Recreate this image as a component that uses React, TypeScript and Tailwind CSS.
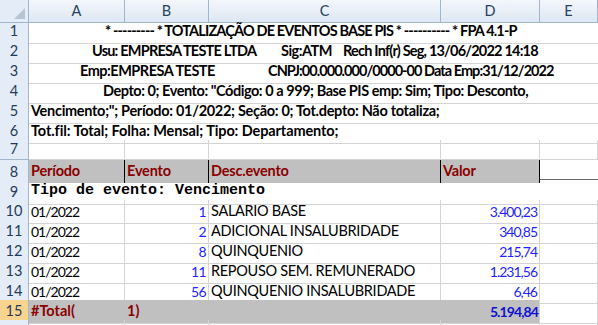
const COLS = ['A', 'B', 'C', 'D', 'E']
const GRID = 'grid grid-cols-[29px_96px_84px_232px_99px_58px] h-[20px]'
const FONT = "font-['Lato','Liberation_Sans',sans-serif]"

const DATA = [
  { n: 10, per: '01/2022', ev: '1', desc: 'SALARIO BASE', val: '3.400,23' },
  { n: 11, per: '01/2022', ev: '2', desc: 'ADICIONAL INSALUBRIDADE', val: '340,85' },
  { n: 12, per: '01/2022', ev: '8', desc: 'QUINQUENIO', val: '215,74' },
  { n: 13, per: '01/2022', ev: '11', desc: 'REPOUSO SEM. REMUNERADO', val: '1.231,56' },
  { n: 14, per: '01/2022', ev: '56', desc: 'QUINQUENIO INSALUBRIDADE', val: '6,46' },
]

function RowHead({ n, active }: { n?: number; active?: boolean }) {
  return (
    <div
      className={`flex items-center justify-center border-r border-b border-[#9eb6ce] text-[14.5px] leading-none text-[#1f3b5c] ${
        active ? 'bg-[#f8d48f]' : 'bg-[#e4ecf7]'
      }`}
    >
      {n}
    </div>
  )
}

// merged-looking rows: text overflows across A..E, no vertical gridlines
function Band({ n, className = '', children }: { n: number; className?: string; children: React.ReactNode }) {
  return (
    <div className={GRID}>
      <RowHead n={n} />
      <div className={`col-span-5 flex items-end pb-[1px] border-b border-[#d4d4d4] text-[14.5px] font-bold whitespace-pre ${className}`}>
        {children}
      </div>
    </div>
  )
}

export default function App() {
  const cell = 'border-r border-b border-[#d4d4d4] flex items-end pb-[1px] px-[2px] text-[14.5px] whitespace-pre'
  return (
    <div className={`w-[598px] h-[325px] overflow-hidden bg-white text-black ${FONT}`}>
      <div className={GRID}>
        <div className="relative bg-[#e4ecf7] border-r border-b border-[#9eb6ce]">
          <div className="absolute right-[3px] bottom-[3px] w-0 h-0 border-l-[11px] border-l-transparent border-b-[11px] border-b-[#b7c4d4]" />
        </div>
        {COLS.map(c => (
          <div
            key={c}
            className="flex items-center justify-center bg-gradient-to-b from-[#f3f7fb] to-[#dde7f2] border-r border-b border-[#9eb6ce] text-[14.5px] text-[#27415f]"
          >
            {c}
          </div>
        ))}
      </div>

      <Band n={1} className="pl-[76px] tracking-[-0.85px]">
        * --------- * TOTALIZAÇÃO DE EVENTOS BASE PIS * ---------- * FPA 4.1-P
      </Band>
      <Band n={2} className="pl-[63px]">
        <span className="w-[189px] shrink-0 tracking-[-0.8px]">Usu: EMPRESA TESTE LTDA</span>
        <span className="w-[62px] shrink-0 tracking-[-0.5px]">Sig:ATM</span>
        <span className="tracking-[-0.8px]">Rech Inf(r) Seg, 13/06/2022 14:18</span>
      </Band>
      <Band n={3} className="pl-[51px]">
        <span className="w-[188px] shrink-0 tracking-[-0.5px]">Emp:EMPRESA TESTE</span>
        <span className="tracking-[-0.95px]">CNPJ:00.000.000/0000-00 Data Emp:31/12/2022</span>
      </Band>
      <Band n={4} className="pl-[74px] tracking-[-0.45px]">
        Depto: 0; Evento: "Código: 0 a 999; Base PIS emp: Sim; Tipo: Desconto,
      </Band>
      <Band n={5} className="pl-[2px] tracking-[-0.3px]">
        Vencimento;"; Período: 01/2022; Seção: 0; Tot.depto: Não totaliza;
      </Band>
      <Band n={6} className="pl-[2px] tracking-[-0.1px]">
        Tot.fil: Total; Folha: Mensal; Tipo: Departamento;
      </Band>

      <div className={GRID}>
        <RowHead n={7} />
        <div className={cell} />
        <div className={cell} />
        <div className={cell} />
        <div className={cell} />
        <div className={cell} />
      </div>

      <div className={`${GRID} border-b border-[#6b6b6b]`}>
        <div className="flex items-center justify-center bg-[#e4ecf7] border-r border-[#9eb6ce] text-[14.5px] text-[#1f3b5c]">8</div>
        {['Período', 'Evento', 'Desc.evento', 'Valor'].map(h => (
          <div key={h} className="bg-[#c0c0c0] border-r border-black flex items-end pb-[1px] px-[2px] text-[14.5px] font-bold text-[#8b0000] tracking-[-0.2px]">
            {h}
          </div>
        ))}
        <div />
      </div>

      <div className={GRID}>
        <RowHead n={9} />
        <div className="col-span-5 flex items-end pb-[1px] px-[2px] border-b border-[#d4d4d4] font-['Liberation_Mono',monospace] font-bold text-[15px] whitespace-pre">
          Tipo de evento: Vencimento
        </div>
      </div>

      {DATA.map(r => (
        <div key={r.n} className={GRID}>
          <RowHead n={r.n} />
          <div className={`${cell} text-[14px] tracking-[-1px]`}>{r.per}</div>
          <div className={`${cell} justify-end text-[14px] text-[#1f1fff] tracking-[-0.6px]`}>{r.ev}</div>
          <div className={`${cell} tracking-[-0.3px]`}>{r.desc}</div>
          <div className={`${cell} justify-end text-[14px] text-[#1f1fff] tracking-[-1px]`}>{r.val}</div>
          <div className={cell} />
        </div>
      ))}

      <div className={GRID}>
        <RowHead n={15} active />
        <div className="col-span-4 grid grid-cols-[96px_84px_232px_99px] bg-[#c0c0c0] border-r border-b border-[#d4d4d4] text-[14.5px] font-bold">
          <div className="flex items-end pb-[1px] px-[2px] text-[#8b0000]">#Total(</div>
          <div className="flex items-end pb-[1px] px-[2px] text-[#8b0000]">1)</div>
          <div />
          <div className="flex items-end justify-end pb-[1px] px-[2px] text-[14px] text-[#1010d0] tracking-[-0.9px]">5.194,84</div>
        </div>
        <div className={cell} />
      </div>

      <div className={GRID}>
        <RowHead />
        <div className={cell} />
        <div className={cell} />
        <div className={cell} />
        <div className={cell} />
        <div className={cell} />
      </div>
    </div>
  )
}
